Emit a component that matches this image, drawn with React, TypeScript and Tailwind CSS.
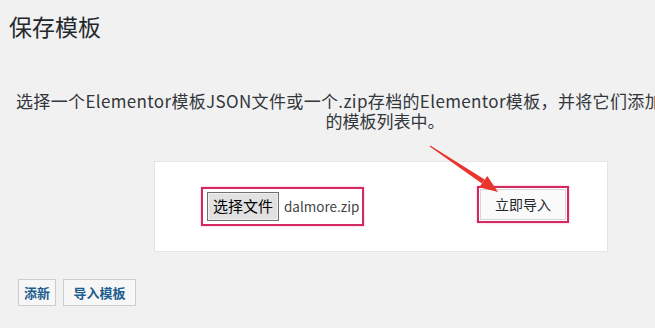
import React from "react";

export default function App() {
  return (
    <div
      className="relative w-[655px] h-[328px] overflow-hidden bg-[#f1f1f1] text-[#23282d]"
      style={{ fontFamily: '"Noto Sans CJK SC", "Noto Sans", sans-serif' }}
    >
      <h1 className="pt-[12px] pl-[9px] text-[23px] leading-[28px] font-normal">保存模板</h1>

      <div className="mt-[51px] ml-[16px] w-[732px] text-center text-[17px] leading-[20px] text-[#32373c]">
        <div className="whitespace-nowrap tracking-[0.35px]">
          选择一个Elementor模板JSON文件或一个.zip存档的Elementor模板，并将它们添加到您的库中可用
        </div>
        <div className="pl-[6px]">的模板列表中。</div>
      </div>

      <div className="mt-[30px] ml-[154px] w-[454px] h-[91px] bg-white border border-[#e5e5e5] flex items-start pt-[25px] pl-[46px]">
        <div className="w-[163px] h-[39px] border-2 border-[#d22a5f] flex items-start pt-[3px] pl-[4px] shadow-[0_0_2px_#f4a6bf]">
          <div className="w-[72px] h-[29px] border border-[#707070] bg-[#e1e1e1] flex items-center justify-center text-[15px] text-black shadow-[inset_0_0_0_1px_#f0f0f0]">
            选择文件
          </div>
          <span className="ml-[5px] mt-[5px] text-[13.5px] leading-[18px] text-[#444]">dalmore.zip</span>
        </div>
        <div className="ml-[113px] -mt-[1px] w-[92px] h-[37px] border-2 border-[#d22a5f] bg-white flex p-[1px] shadow-[0_0_2px_#f4a6bf]">
          <div className="flex-1 border border-[#d5d5d5] bg-[#fafafa] flex items-center justify-center text-[14px] text-[#23282d]">
            立即导入
          </div>
        </div>
      </div>

      <div className="mt-[27px] ml-[18px] flex gap-[7px]">
        <div className="w-[38px] h-[27px] bg-[#f7f7f7] border border-[#cccccc] flex items-center justify-center text-[13px] font-bold text-[#1d5d8f]">
          添新
        </div>
        <div className="w-[73px] h-[27px] bg-[#f7f7f7] border border-[#cccccc] flex items-center justify-center text-[13px] font-bold text-[#1d5d8f]">
          导入模板
        </div>
      </div>

      <svg
        className="absolute left-[425px] top-[140px]"
        width="85"
        height="60"
        viewBox="0 0 85 60"
      >
        <polygon
          points="4.7,6.4 5.3,5.6 59.7,39.6 56.9,43.6"
          fill="#e8352e"
        />
        <polygon points="73,52 62.3,35.9 54.3,47.3" fill="#e8352e" />
      </svg>
    </div>
  );
}
